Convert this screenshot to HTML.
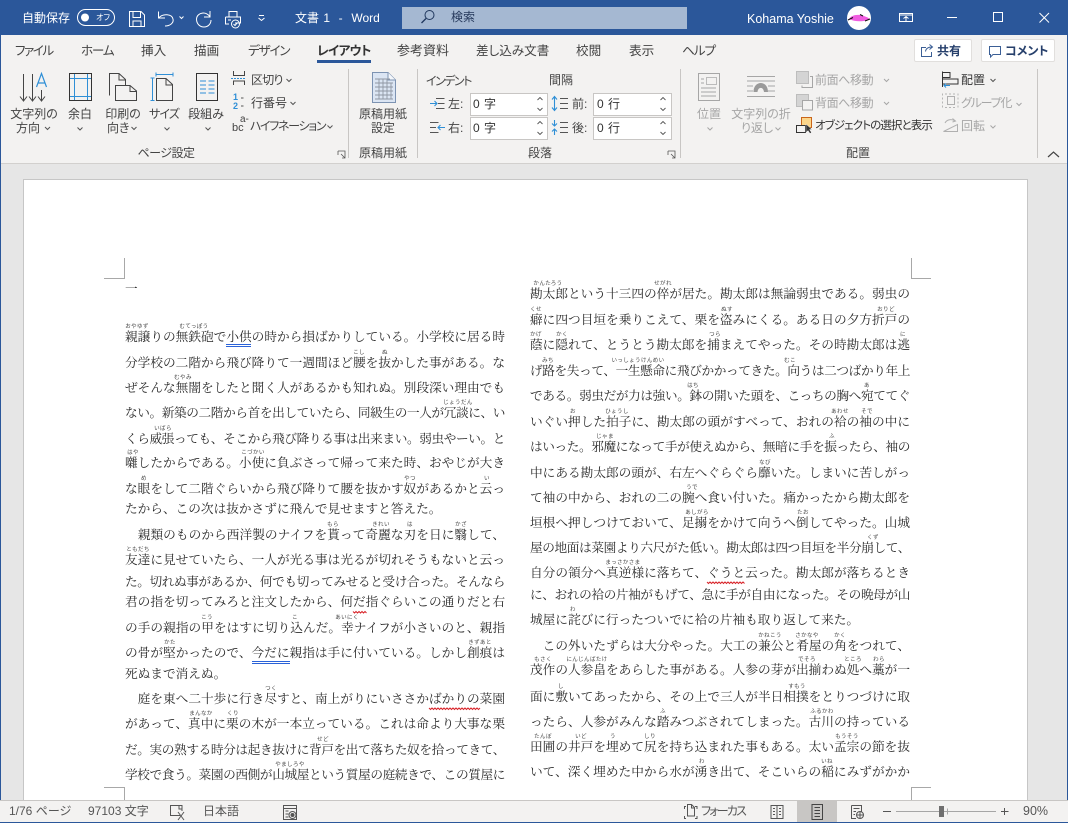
<!DOCTYPE html>
<html lang="ja"><head><meta charset="utf-8"><title>文書 1 - Word</title>
<style>
html,body{margin:0;padding:0;width:1068px;height:823px;overflow:hidden;background:#e6e6e6}
body{position:relative;font-family:"Liberation Sans","Noto Sans CJK JP",sans-serif;font-size:12px;color:#444}
div,span,p,i,svg{position:absolute}
.t{white-space:nowrap;line-height:16px;color:#444;font-style:normal;font-feature-settings:"palt"}
.w{color:#fff}.g{color:#a6a6a6}.c{text-align:center;transform:translateX(-50%)}
.tab{top:43px;font-size:12.6px}
p{margin:0;width:380px;height:20px;line-height:20px;font-family:"Liberation Serif","Noto Serif CJK JP","Noto Serif CJK SC",serif;font-size:12.67px;color:#2a2a2a;white-space:nowrap;text-align:justify;text-align-last:justify}
p.l{left:125px}p.r{left:530px}p.e{text-align-last:left}p.n{letter-spacing:-.42px}
i{font-family:"Liberation Sans","Noto Sans CJK JP",sans-serif;font-size:5.5px;line-height:7px;color:#444;font-style:normal;white-space:nowrap;transform:translateX(-50%);letter-spacing:.4px;margin-top:1.5px}
.box{background:#fff;border:1px solid #c8c6c4;box-sizing:border-box}
</style></head><body>
<!-- chrome backgrounds -->
<div style="left:0;top:0;width:1068px;height:35px;background:#2b579a"></div>
<div style="left:0;top:35px;width:1068px;height:128px;background:#f3f2f1;border-bottom:1px solid #d2d0ce"></div>
<div style="left:402px;top:7px;width:285px;height:22px;background:#a5b8d2"></div>
<div style="left:0;top:35px;width:1px;height:788px;background:#2b579a"></div>
<div style="left:1067px;top:35px;width:1px;height:788px;background:#2b579a"></div>
<!-- page -->
<div style="left:23px;top:179px;width:1005px;height:621px;background:#fff;border:1px solid #c6c6c6;border-bottom:0;box-sizing:border-box"></div>
<div style="left:0;top:800px;width:1068px;height:23px;background:#f3f2f1;border-top:1px solid #c8c6c4;border-bottom:1px solid #2b579a;box-sizing:border-box"></div>
<div style="left:797px;top:801px;width:40px;height:21px;background:#c8c6c4"></div>
<div style="left:914px;top:39px;width:58px;height:23px;background:#fff;border:1px solid #e1dfdd;box-sizing:border-box;border-radius:2px"></div>
<div style="left:981px;top:39px;width:74px;height:23px;background:#fff;border:1px solid #e1dfdd;box-sizing:border-box;border-radius:2px"></div>
<div style="left:470px;top:93px;width:78px;height:23px" class="box"></div>
<div style="left:470px;top:117px;width:78px;height:23px" class="box"></div>
<div style="left:593px;top:93px;width:79px;height:23px" class="box"></div>
<div style="left:593px;top:117px;width:79px;height:23px" class="box"></div>
<div style="left:317px;top:60px;width:54px;height:3px;background:#2b579a"></div>

<svg style="left:0;top:0" width="1068" height="823" viewBox="0 0 1068 823" fill="none">
<!-- separators -->
<g stroke="#c8c6c4"><path d="M348.500 69V158M417.500 69V158M680.500 69V158M1037.500 69V158"/></g>
<!-- title bar -->
<g stroke="#fff" stroke-width="1">
<rect x="77.500" y="9.500" width="37" height="16" rx="8"/>
<circle cx="85" cy="17.500" r="4" fill="#fff" stroke="none"/>
<path d="M129.500 11.500H141L144.500 15V26.500H129.500ZM133 11.500V17.500H140.500V11.500M133 26.500V21H141V26.500"/>
<path d="M158.500 11.500V18H165M158.500 18C163 13 172 14 173 19C174 23 170 26 165 26"/>
<path d="M179.500 16.500L181.500 18.500L183.500 16.500"/>
<path d="M210 11V17H204M210 17C207 11 197 12 196.500 19C196.500 24 200 27 204 27C208 27 211 24 211 20"/>
<path d="M229 17V11.500H237V17M225.500 17H240.500V23H235M225.500 17V24H229M228 20H231"/>
<circle cx="235.500" cy="24" r="4"/><path d="M233.500 24L235 25.500L237.500 22.500"/>
<path d="M259 15.500H264M258.500 18L261.500 20.500L264.500 18"/>
<circle cx="429.500" cy="15" r="4.500" stroke="#21385e"/><path d="M426 18.500L421.500 23" stroke="#21385e" stroke-width="1.300"/>
<path d="M899.500 13.500H912.500V21.500H899.500ZM899.500 15H912.500M906 21V16.500M903.500 18.500L906 16.500L908.500 18.500"/>
<path d="M947 17.500H957"/><rect x="993.500" y="12.500" width="9" height="9"/>
<path d="M1039.500 13L1049 22.500M1049 13L1039.500 22.500"/>
</g>
<circle cx="859" cy="18" r="12" fill="#fff"/>
<path d="M849 19C852 14 861 13 870 19C865 22 855 22 849 19Z" fill="#f05ce0"/>
<path d="M848 20L853 17.500M860 14.500L863 16M865 21L870 19" stroke="#111" stroke-width="1"/>
<!-- share / comment icons -->
<g stroke="#3b5f96"><path d="M926 47.500H921.500V56.500H931.500V52M925.500 51.500C926 48 929 47 932 47M929.500 44.500L932.500 47L929.500 49.500"/>
<path d="M989.500 46.500H1000.500V54.500H993L990.500 57V54.500H989.500Z"/></g>
<!-- text direction -->
<path d="M23.500 74V100M20 96.500L23.500 101L27 96.500M32.500 74V100M29 96.500L32.500 101L36 96.500M41.500 90V100M38 96.500L41.500 101L45 96.500" stroke="#444"/>
<path d="M36.500 87L41.500 73.500L46.500 87M38 83H45" stroke="#2f8fd6" stroke-width="1.200"/>
<!-- margins -->
<rect x="69.500" y="73.500" width="22" height="27" stroke="#333"/>
<path d="M74.500 74V100M87.500 74V100M70 78.500H91M70 96.500H91" stroke="#2f8fd6"/>
<!-- orientation -->
<path d="M109.500 95.500V73.500H119L125.500 79.500V85M119 74V80H125.500" stroke="#444"/>
<path d="M115.500 100.500V85.500H130L136.500 91V100.500ZM130 86V91.500H136.500" stroke="#444" fill="#f3f2f1"/>
<!-- size -->
<path d="M156.500 100.500V78.500H166L172.500 84.500V100.500ZM166 79V85H172.500" stroke="#444"/>
<path d="M152.500 78V100.500M150.500 78H154.500M150.500 100.500H154.500M156 74.500H173M156 72.500V76.500M173 72.500V76.500" stroke="#2f8fd6"/>
<!-- columns -->
<rect x="196.500" y="73.500" width="21" height="27" stroke="#333"/>
<path d="M200 81H206M200 85H206M200 89H206M200 93H206M208.500 81H214.500M208.500 85H214.500M208.500 89H214.500M208.500 93H214.500" stroke="#2f8fd6"/>
<!-- breaks -->
<path d="M233.500 71V75.500H244.500V71M233.500 85V81H244.500V85" stroke="#444"/>
<path d="M231 78.500H246" stroke="#2f8fd6" stroke-dasharray="2 1"/>
<!-- chevrons -->
<g stroke="#555">
<path d="M45 127L47.500 129.500L50 127M77.500 127.500L80 130L82.500 127.500M131.500 127L134 129.500L136.500 127M164.500 127.500L167 130L169.500 127.500M205.500 127.500L208 130L210.500 127.500M286.500 79L289 81.500L291.500 79M290.500 102L293 104.500L295.500 102M327.500 125.500L330 128L332.500 125.500M990.500 79L993 81.500L995.500 79"/>
<path d="M1048 157L1053.500 152L1059 157" stroke="#444" stroke-width="1.200"/>
<path d="M338 151H345V158M338 151V155M341 154L345 158M345 155V158H342" stroke="#555" stroke-width=".8"/>
<path d="M668 151H675V158M668 151V155M671 154L675 158M675 155V158H672" stroke="#555" stroke-width=".8"/>
<!-- spinner chevrons -->
<path d="M537.500 100L540 97.500L542.500 100M537.500 108L540 110.500L542.500 108M537.500 124L540 121.500L542.500 124M537.500 132L540 134.500L542.500 132M660.500 100L663 97.500L665.500 100M660.500 108L663 110.500L665.500 108M660.500 124L663 121.500L665.500 124M660.500 132L663 134.500L665.500 132" stroke-width=".9"/>
<path d="M241 98H243.500M241 106H243.500"/>
</g>
<!-- indent icons -->
<g stroke="#555"><path d="M436 98.500H444.500M438 103.500H444.500M436 108.500H444.500M430 122.500H438.500M430 127.500H436M430 132.500H438.500M560 98.500H568M560 103.500H568M560 108.500H568M560 122.500H568M560 127.500H568M560 132.500H568"/></g>
<g stroke="#2f8fd6"><path d="M430 103.500H437M434.500 101L437 103.500L434.500 106M445 127.500H438M440.500 125L438 127.500L440.500 130M554.500 97V110M552 99.500L554.500 96.500L557 99.500M552 107.500L554.500 110.500L557 107.500M554.500 120V126M552 123.500L554.500 126L557 123.500M554.500 129V135M552 131.500L554.500 129L557 131.500" stroke-width="1.100"/></g>
<!-- position -->
<g stroke="#a6a6a6">
<rect x="698.500" y="73.500" width="21" height="27"/>
<rect x="706.500" y="77.500" width="10" height="7" stroke="#bbb"/><path d="M701 79H704M701 83H704M701 88H716M701 92H716M701 96H716"/>
<path d="M747 76.500H775M747 81H775M747 86H753M768 86H775M747 91H753M768 91H775M747 96.500H775"/>
<path d="M753.500 92C753.500 80 768 80 768 92H764C763.500 86.500 758 86.500 757.500 92Z" fill="#9a9a9a" stroke="none"/>
<path d="M707.500 127.500L710 130L712.500 127.500M775.500 127.500L778 130L780.500 127.500M884 79L886.500 81.500L889 79M884 102L886.500 104.500L889 102M1016.500 103L1019 105.500L1021.500 103M990.500 125.500L993 128L995.500 125.500"/>
</g>
<rect x="796.500" y="71.500" width="12" height="12" fill="#d4d4d4" stroke="#bdbdbd"/>
<path d="M802 85.500V87.500H812.500V76.500H810" stroke="#a6a6a6"/>
<rect x="796.500" y="94.500" width="12" height="12" fill="#d4d4d4" stroke="#bdbdbd"/>
<rect x="802.500" y="100.500" width="10" height="9.500" fill="#f3f2f1" stroke="#a6a6a6"/>
<!-- select pane -->
<rect x="801.500" y="117.500" width="10" height="10" fill="#fbd58a" stroke="#c9651a"/>
<rect x="796.500" y="125.500" width="9" height="7" fill="#f3f2f1" stroke="#333"/>
<path d="M806 124V132.500L808 130.500L810 133.500L811.500 132.500L809.500 129.500H812Z" fill="#333" stroke="#fff" stroke-width=".4"/>
<!-- align -->
<path d="M942.500 71.500V87" stroke="#333"/><path d="M943 72.500H950V77.500H943M943 79H958V84H943" stroke="#333"/>
<path d="M944 85.500H950M946 83.500L944 85.500L946 87.500" stroke="#2f8fd6"/>
<path d="M942.500 93.500V108M958 93.500V108M945 94H955M945 107.500H955" stroke="#b5b5b5" stroke-dasharray="2 2"/>
<rect x="947.500" y="96.500" width="7" height="8" stroke="#b0b0b0"/>
<path d="M943.500 131.500L957.500 124.500V131.500ZM945 123C947 119 952 119 955 121M952.500 118.500L955.500 121L952.500 122" stroke="#b0b0b0"/>
<!-- crop marks -->
<path d="M124.500 258V278.500H104M911.500 258V278.500H931M104 787.500H124.500V800M931 787.500H911.500V800" stroke="#a8a8a8"/>
<!-- double underline / wavy -->
<path d="M226 344.500H251M226 346.500H251M252 661.500H290M252 663.500H290" stroke="#2a62d8" stroke-width="1"/>
<g stroke="#d8242a" stroke-width="1" fill="none">
<path d="M353 611.500 l1.500 1.500 1.500-1.500 1.500 1.500 1.500-1.500 1.500 1.500 1.500-1.500 1.500 1.500 1.500-1.500 1.500 1.500"/>
<path d="M429 708 l1.500 1.500 1.500-1.500 1.500 1.500 1.500-1.500 1.500 1.500 1.500-1.500 1.500 1.500 1.500-1.500 1.500 1.500 1.500-1.500 1.500 1.500 1.500-1.500 1.500 1.500 1.500-1.500 1.500 1.500 1.500-1.500 1.500 1.500 1.500-1.500 1.500 1.500 1.500-1.500 1.500 1.500 1.500-1.500 1.500 1.500 1.500-1.500 1.500 1.500 1.500-1.500 1.500 1.500 1.500-1.500 1.500 1.500 1.500-1.500 1.500 1.500 1.500-1.500 1.500 1.500 1.500-1.500"/>
<path d="M707 582 l1.500 1.500 1.500-1.500 1.500 1.500 1.500-1.500 1.500 1.500 1.500-1.500 1.500 1.500 1.500-1.500 1.500 1.500 1.500-1.500 1.500 1.500 1.500-1.500 1.500 1.500 1.500-1.500 1.500 1.500 1.500-1.500 1.500 1.500 1.500-1.500 1.500 1.500 1.500-1.500 1.500 1.500 1.500-1.500 1.500 1.500 1.500-1.500 1.500 1.500"/>
</g>
<!-- status icons -->
<g stroke="#555">
<path d="M180 815.500H170.500V805.500H182V811M179 805.500V809H182"/>
<path d="M178 812L184 820M184 812L178 820"/>
<path d="M283.500 805.500H296.500V819.500H283.500ZM283.500 808.500H296.500M285.500 811H288.500M285.500 814H288.500M285.500 817H288.500"/>
<circle cx="292.500" cy="815" r="3.500" fill="#f3f2f1"/><circle cx="292.500" cy="815" r="1.500" fill="#555"/>
<path d="M686 806.500H684.500V809M695 806.500H697V809M684.500 816V818.500H686M697 816V818.500H695"/>
<path d="M687.500 816V804.500H691.500L694.500 807.500V816ZM691.500 805V808H694.500"/>
<path d="M771 805.500H777V818.500H771ZM777 805.500H783V818.500H777ZM773 808.500H775M773 811.500H775M773 814.500H775M779 808.500H781M779 811.500H781M779 814.500H781"/>
<path d="M812 804.500H822.500V819.500H812ZM814.500 807.500H820M814.500 810.500H820M814.500 813.500H820M814.500 816.500H820" stroke="#444"/>
<path d="M851.500 805.500H861.500V814M851.500 805.500V818.500H856M853.500 808.500H859.500M853.500 811.500H856M853.500 814.500H855"/>
<circle cx="860" cy="815" r="3.500" fill="#f3f2f1"/><path d="M856.500 815H863.500M860 811.500V818.500"/>
<path d="M883 811.500H891M1001 811.500H1008.500M1004.500 808V815"/>
</g>
<path d="M896 811.500H996" stroke="#a6a6a6"/><path d="M947.500 808.500V814.500" stroke="#a6a6a6"/>
<rect x="939" y="806" width="5" height="11" fill="#6f6f6f"/>
</svg>

<!-- title text -->
<span class="t w" style="left:22px;top:10px">自動保存</span>
<span class="t w" style="left:96px;top:11px;font-size:8px;line-height:14px">オフ</span>
<span class="t w" style="left:295px;top:10px;word-spacing:1px">文書 1&nbsp; -&nbsp; Word</span>
<span class="t" style="left:451px;top:9px;color:#26395c">検索</span>
<span class="t w" style="left:747px;top:11px;font-size:12.500px">Kohama Yoshie</span>
<!-- tabs -->
<span class="t tab" style="left:15px;letter-spacing:-1.500px">ファイル</span>
<span class="t tab" style="left:81px;letter-spacing:-1.200px">ホーム</span>
<span class="t tab" style="left:141px">挿入</span>
<span class="t tab" style="left:194px">描画</span>
<span class="t tab" style="left:248px;letter-spacing:-1.200px">デザイン</span>
<span class="t tab" style="left:317px;font-weight:700;color:#333;letter-spacing:-.7px">レイアウト</span>
<span class="t tab" style="left:397px;font-size:13px">参考資料</span>
<span class="t tab" style="left:476px">差し込み文書</span>
<span class="t tab" style="left:576px">校閲</span>
<span class="t tab" style="left:629px">表示</span>
<span class="t tab" style="left:682px;letter-spacing:-1px">ヘルプ</span>
<span class="t" style="left:937px;top:43px;font-weight:700;color:#27406c">共有</span>
<span class="t" style="left:1005px;top:43px;font-weight:700;color:#27406c">コメント</span>
<!-- ribbon labels -->
<span class="t c" style="left:34px;top:106px">文字列の</span>
<span class="t" style="left:16px;top:120px">方向</span>
<span class="t c" style="left:80px;top:106px">余白</span>
<span class="t c" style="left:123px;top:106px">印刷の</span>
<span class="t" style="left:107px;top:120px">向き</span>
<span class="t c" style="left:164px;top:106px;letter-spacing:-.9px">サイズ</span>
<span class="t c" style="left:206px;top:106px">段組み</span>
<span class="t" style="left:251px;top:72px;letter-spacing:-.8px">区切り</span>
<span class="t" style="left:251px;top:95px">行番号</span>
<span class="t" style="left:250px;top:118px;letter-spacing:-1.300px">ハイフネーション</span>
<span class="t" style="left:233px;top:92px;font-size:9px;line-height:10px;color:#2f8fd6;font-weight:700">1</span>
<span class="t" style="left:233px;top:101px;font-size:9px;line-height:10px;color:#2f8fd6;font-weight:700">2</span>
<span class="t" style="left:240px;top:114px;font-size:10px;line-height:12px">a-</span>
<span class="t" style="left:232px;top:122px;font-size:11px;line-height:12px">bc</span>
<span class="t c" style="left:383px;top:106px">原稿用紙</span>
<span class="t c" style="left:383px;top:120px">設定</span>
<span class="t c" style="left:166px;top:145px;letter-spacing:-.5px">ページ設定</span>
<span class="t c" style="left:383px;top:145px">原稿用紙</span>
<span class="t" style="left:426px;top:73px;letter-spacing:-1.500px">インデント</span>
<span class="t" style="left:549px;top:72px">間隔</span>
<span class="t" style="left:448px;top:96px">左:</span>
<span class="t" style="left:448px;top:120px">右:</span>
<span class="t" style="left:572px;top:96px">前:</span>
<span class="t" style="left:572px;top:120px">後:</span>
<span class="t" style="left:473px;top:96px;color:#333;word-spacing:1px">0 字</span>
<span class="t" style="left:473px;top:120px;color:#333;word-spacing:1px">0 字</span>
<span class="t" style="left:597px;top:96px;color:#333;word-spacing:1px">0 行</span>
<span class="t" style="left:597px;top:120px;color:#333;word-spacing:1px">0 行</span>
<span class="t c" style="left:540px;top:145px">段落</span>
<span class="t c g" style="left:709px;top:106px">位置</span>
<span class="t c g" style="left:761px;top:106px">文字列の折</span>
<span class="t c g" style="left:757px;top:120px">り返し</span>
<span class="t g" style="left:815px;top:72px;letter-spacing:-.4px">前面へ移動</span>
<span class="t g" style="left:815px;top:95px;letter-spacing:-.4px">背面へ移動</span>
<span class="t" style="left:815px;top:118px;color:#333;font-size:11.500px;letter-spacing:-.9px">オブジェクトの選択と表示</span>
<span class="t" style="left:961px;top:72px;color:#333">配置</span>
<span class="t g" style="left:961px;top:95px;letter-spacing:-1.200px">グループ化</span>
<span class="t g" style="left:961px;top:118px">回転</span>
<span class="t c" style="left:858px;top:145px">配置</span>
<!-- manuscript icon -->
<svg style="left:372px;top:72px" width="24" height="31" viewBox="0 0 24 31" fill="none">
<path d="M.5 .5H16L23.500 8V30.500H.5Z" fill="#dbe5f3" stroke="#7d93b2"/>
<path d="M16 .5V8H23.500" stroke="#7d93b2" fill="#f4f7fb"/>
<path d="M3 7H18M3 11H21M3 15H21M3 19H21M3 23H21M3 27H21M7 7V27M11 7V27M15 7V27M19 11V27" stroke="#8f97a3" stroke-width=".9"/>
</svg>
<!-- status text -->
<span class="t" style="left:9px;top:803px;color:#555">1/76 ページ</span>
<span class="t" style="left:88px;top:803px;color:#555">97103 文字</span>
<span class="t" style="left:203px;top:803px;color:#555">日本語</span>
<span class="t" style="left:701px;top:803px;color:#555;letter-spacing:-1.800px">フォーカス</span>
<span class="t" style="left:1023px;top:803px;color:#555;font-size:12.500px">90%</span>

<!-- LEFT COLUMN -->
<p class="l e" style="top:279px">一</p>
<p class="l" style="top:327px">親譲りの無鉄砲で小供の時から損ばかりしている。小学校に居る時</p>
<p class="l" style="top:353px">分学校の二階から飛び降りて一週間ほど腰を抜かした事がある。な</p>
<p class="l" style="top:378px">ぜそんな無闇をしたと聞く人があるかも知れぬ。別段深い理由でも</p>
<p class="l n" style="top:403px">ない。新築の二階から首を出していたら、同級生の一人が冗談に、い</p>
<p class="l n" style="top:429px">くら威張っても、そこから飛び降りる事は出来まい。弱虫やーい。と</p>
<p class="l" style="top:453px">囃したからである。小使に負ぶさって帰って来た時、おやじが大き</p>
<p class="l" style="top:479px">な眼をして二階ぐらいから飛び降りて腰を抜かす奴があるかと云っ</p>
<p class="l e" style="top:499px">たから、この次は抜かさずに飛んで見せますと答えた。</p>
<p class="l" style="top:525px">&emsp;親類のものから西洋製のナイフを貰って奇麗な刃を日に翳して、</p>
<p class="l" style="top:550px">友達に見せていたら、一人が光る事は光るが切れそうもないと云っ</p>
<p class="l n" style="top:572px">た。切れぬ事があるか、何でも切ってみせると受け合った。そんなら</p>
<p class="l" style="top:592px">君の指を切ってみろと注文したから、何だ指ぐらいこの通りだと右</p>
<p class="l" style="top:618px">の手の親指の甲をはすに切り込んだ。幸ナイフが小さいのと、親指</p>
<p class="l" style="top:643px">の骨が堅かったので、今だに親指は手に付いている。しかし創痕は</p>
<p class="l e" style="top:664px">死ぬまで消えぬ。</p>
<p class="l" style="top:689px">&emsp;庭を東へ二十歩に行き尽すと、南上がりにいささかばかりの菜園</p>
<p class="l" style="top:714px">があって、真中に栗の木が一本立っている。これは命より大事な栗</p>
<p class="l n" style="top:740px">だ。実の熟する時分は起き抜けに背戸を出て落ちた奴を拾ってきて、</p>
<p class="l n" style="top:765px">学校で食う。菜園の西側が山城屋という質屋の庭続きで、この質屋に</p>
<!-- RIGHT COLUMN -->
<p class="r" style="top:284px">勘太郎という十三四の倅が居た。勘太郎は無論弱虫である。弱虫の</p>
<p class="r" style="top:310px">癖に四つ目垣を乗りこえて、栗を盗みにくる。ある日の夕方折戸の</p>
<p class="r" style="top:335px">蔭に隠れて、とうとう勘太郎を捕まえてやった。その時勘太郎は逃</p>
<p class="r n" style="top:361px">げ路を失って、一生懸命に飛びかかってきた。向うは二つばかり年上</p>
<p class="r n" style="top:386px">である。弱虫だが力は強い。鉢の開いた頭を、こっちの胸へ宛ててぐ</p>
<p class="r" style="top:412px">いぐい押した拍子に、勘太郎の頭がすべって、おれの袷の袖の中に</p>
<p class="r n" style="top:437px">はいった。邪魔になって手が使えぬから、無暗に手を振ったら、袖の</p>
<p class="r" style="top:463px">中にある勘太郎の頭が、右左へぐらぐら靡いた。しまいに苦しがっ</p>
<p class="r" style="top:488px">て袖の中から、おれの二の腕へ食い付いた。痛かったから勘太郎を</p>
<p class="r" style="top:513px">垣根へ押しつけておいて、足搦をかけて向うへ倒してやった。山城</p>
<p class="r n" style="top:538px">屋の地面は菜園より六尺がた低い。勘太郎は四つ目垣を半分崩して、</p>
<p class="r" style="top:563px">自分の領分へ真逆様に落ちて、ぐうと云った。勘太郎が落ちるとき</p>
<p class="r n" style="top:585px">に、おれの袷の片袖がもげて、急に手が自由になった。その晩母が山</p>
<p class="r e" style="top:610px">城屋に詫びに行ったついでに袷の片袖も取り返して来た。</p>
<p class="r" style="top:636px">&emsp;この外いたずらは大分やった。大工の兼公と肴屋の角をつれて、</p>
<p class="r" style="top:660px">茂作の人参畠をあらした事がある。人参の芽が出揃わぬ処へ藁が一</p>
<p class="r" style="top:687px">面に敷いてあったから、その上で三人が半日相撲をとりつづけに取</p>
<p class="r" style="top:712px">ったら、人参がみんな踏みつぶされてしまった。古川の持っている</p>
<p class="r" style="top:737px">田圃の井戸を埋めて尻を持ち込まれた事もある。太い孟宗の節を抜</p>
<p class="r" style="top:762px">いて、深く埋めた中から水が湧き出て、そこいらの稲にみずがかか</p>
<!-- RUBY left -->
<i style="left:137px;top:322px">おやゆず</i><i style="left:194px;top:322px">むてっぽう</i>
<i style="left:359px;top:348px">こし</i><i style="left:385px;top:348px">ぬ</i>
<i style="left:183px;top:373px">むやみ</i>
<i style="left:458px;top:398px">じょうだん</i>
<i style="left:163px;top:424px">いばら</i>
<i style="left:133px;top:448px">はや</i><i style="left:253px;top:448px">こづかい</i>
<i style="left:144px;top:474px">め</i><i style="left:410px;top:474px">やつ</i><i style="left:487px;top:474px">い</i>
<i style="left:333px;top:520px">もら</i><i style="left:381px;top:520px">きれい</i><i style="left:410px;top:520px">は</i><i style="left:461px;top:520px">かざ</i>
<i style="left:138px;top:545px">ともだち</i>
<i style="left:207px;top:613px">こう</i><i style="left:295px;top:613px">こ</i><i style="left:347px;top:613px">あいにく</i>
<i style="left:170px;top:638px">かた</i><i style="left:480px;top:638px">きずあと</i>
<i style="left:271px;top:684px">つく</i>
<i style="left:201px;top:709px">まんなか</i><i style="left:233px;top:709px">くり</i>
<i style="left:323px;top:735px">せど</i>
<i style="left:290px;top:760px">やましろや</i>
<!-- RUBY right -->
<i style="left:548px;top:279px">かんたろう</i><i style="left:663px;top:279px">せがれ</i>
<i style="left:536px;top:305px">くせ</i><i style="left:727px;top:305px">ぬす</i><i style="left:886px;top:305px">おりど</i>
<i style="left:536px;top:330px">かげ</i><i style="left:562px;top:330px">かく</i><i style="left:715px;top:330px">つら</i><i style="left:903px;top:330px">に</i>
<i style="left:548px;top:356px">みち</i><i style="left:638px;top:356px">いっしょうけんめい</i><i style="left:790px;top:356px">むこ</i>
<i style="left:693px;top:381px">はち</i><i style="left:867px;top:381px">あ</i>
<i style="left:573px;top:407px">お</i><i style="left:617px;top:407px">ひょうし</i><i style="left:840px;top:407px">あわせ</i><i style="left:867px;top:407px">そで</i>
<i style="left:605px;top:432px">じゃま</i><i style="left:832px;top:432px">ふ</i>
<i style="left:765px;top:458px">なび</i>
<i style="left:692px;top:483px">うで</i>
<i style="left:697px;top:508px">あしがら</i><i style="left:803px;top:508px">たお</i>
<i style="left:873px;top:533px">くず</i>
<i style="left:623px;top:558px">まっさかさま</i>
<i style="left:573px;top:605px">わ</i>
<i style="left:770px;top:631px">かねこう</i><i style="left:807px;top:631px">さかなや</i><i style="left:840px;top:631px">かく</i>
<i style="left:543px;top:655px">もさく</i><i style="left:587px;top:655px">にんじんばたけ</i><i style="left:807px;top:655px">でそろ</i><i style="left:853px;top:655px">ところ</i><i style="left:879px;top:655px">わら</i>
<i style="left:561px;top:682px">し</i><i style="left:797px;top:682px">すもう</i>
<i style="left:663px;top:707px">ふ</i><i style="left:822px;top:707px">ふるかわ</i>
<i style="left:543px;top:732px">たんぼ</i><i style="left:581px;top:732px">いど</i><i style="left:613px;top:732px">う</i><i style="left:650px;top:732px">しり</i><i style="left:847px;top:732px">もうそう</i>
<i style="left:702px;top:757px">わ</i><i style="left:827px;top:757px">いね</i>
</body></html>
